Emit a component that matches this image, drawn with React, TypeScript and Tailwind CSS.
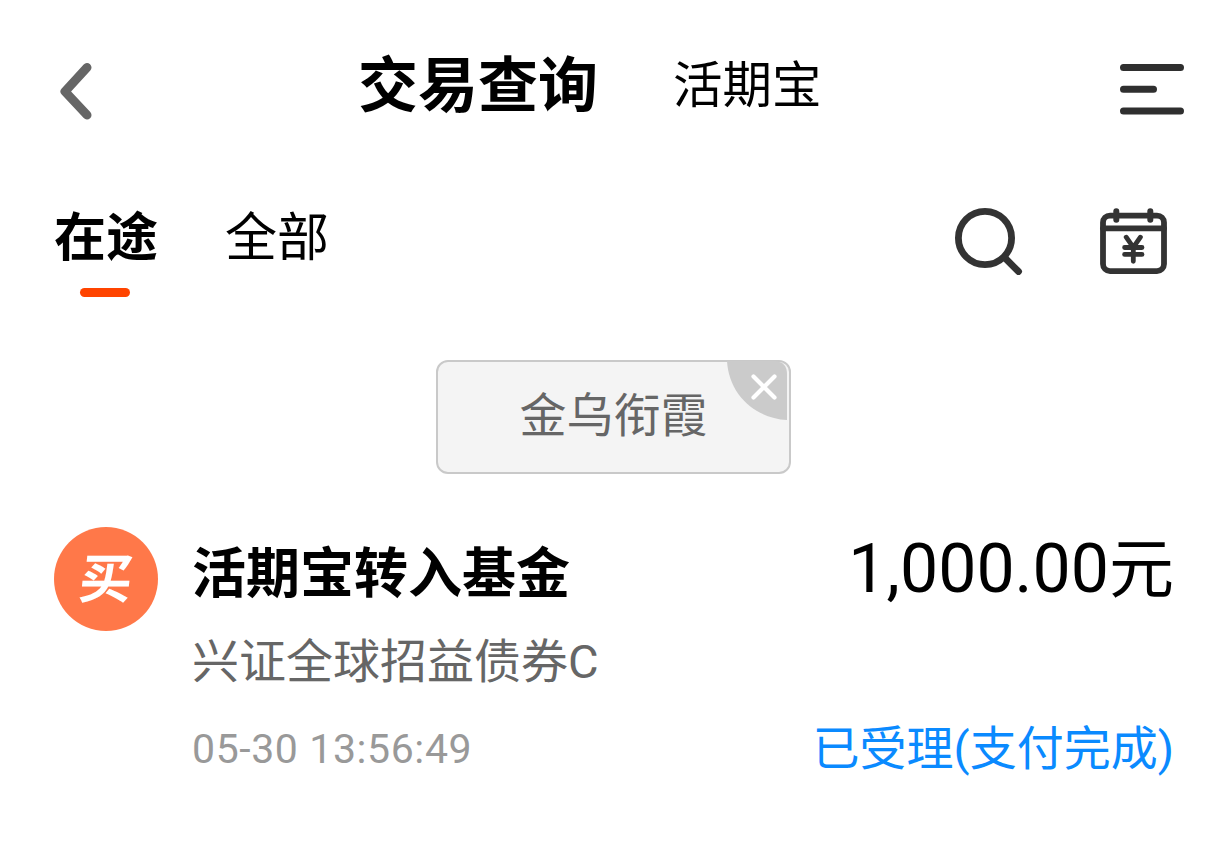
import * as React from "react"

const cjk = "font-['Noto_Sans_CJK_SC',sans-serif]"
const latin = "font-['Roboto','Noto_Sans_CJK_SC',sans-serif]"

const record = {
  badge: "买",
  title: "活期宝转入基金",
  fund: "兴证全球招益债券C",
  time: "05-30 13:56:49",
  amount: "1,000.00",
  unit: "元",
  status: "已受理(支付完成)",
}

function BackIcon() {
  return (
    <svg className="h-[60px] w-[36px]" viewBox="0 0 36 60" fill="none" stroke="#666" strokeWidth="9" strokeLinecap="round" strokeLinejoin="round">
      <path d="M30 7.500 8 31.500 30 55" />
    </svg>
  )
}

function MenuIcon() {
  return (
    <svg className="h-[52px] w-[66px]" viewBox="0 0 66 52" stroke="#2f2f2f" strokeWidth="7" strokeLinecap="round">
      <path d="M4.500 4.500H61.500M4.500 26.200H34.500M4.500 48H61.500" />
    </svg>
  )
}

function SearchIcon() {
  return (
    <svg className="h-[70px] w-[70px]" viewBox="0 0 70 70" fill="none" stroke="#333" strokeWidth="6.800" strokeLinecap="round">
      <circle cx="32" cy="32" r="26.600" />
      <path d="M52 52 65.500 65.500" />
    </svg>
  )
}

function CalendarIcon() {
  return (
    <svg className="h-[68px] w-[68px]" viewBox="0 0 68 68" fill="none" stroke="#333" strokeWidth="5.800" strokeLinecap="round" strokeLinejoin="round">
      <rect x="4" y="8.600" width="61" height="55.500" rx="7" />
      <path d="M4 21.300H65" />
      <path d="M17.300 4.300V12.800M51.300 4.300V12.800" strokeWidth="6" />
      <path d="M27.200 30.200 34.300 40.300 41.400 30.200M34.300 40V54.300M25.600 40.500H43M25.600 47.400H43" strokeWidth="4.800" />
    </svg>
  )
}

function CloseCorner() {
  return (
    <svg className="absolute -top-px right-[2px] h-[59px] w-[60px]" viewBox="0 0 60 59">
      <path d="M0 0H48Q60 1 60 13V59C28 57 2 34 0 0Z" fill="#cbcbcb" />
      <path d="M26.500 15.500 47.500 36.500M47.500 15.500 26.500 36.500" stroke="#fff" strokeWidth="4.200" strokeLinecap="round" />
    </svg>
  )
}

export default function App() {
  return (
    <main className={`h-[854px] w-[1228px] overflow-hidden bg-white text-black ${cjk}`}>
      <header className="flex h-[168px] items-start pr-[43px] pl-[57px]">
        <button className="mt-[60px]">
          <BackIcon />
        </button>
        <h1 className="mt-[41px] ml-[265px] text-[60px] leading-[80px] font-bold">交易查询</h1>
        <span className="mt-[42px] ml-[75px] text-[49.500px] leading-[80px]">活期宝</span>
        <button className="mt-[63px] ml-auto">
          <MenuIcon />
        </button>
      </header>

      <nav className="flex h-[192px] items-start pr-[61px] pl-[54px]">
        <div className="mt-[34px] flex flex-col items-center">
          <span className="text-[52px] leading-[64px] font-bold">在途</span>
          <span className="mt-[22px] mr-[2px] h-[9px] w-[50px] rounded-full bg-[#ff4400]" />
        </div>
        <span className="mt-[34px] ml-[67px] text-[52px] leading-[64px]">全部</span>
        <button className="mt-[38px] ml-auto">
          <SearchIcon />
        </button>
        <button className="mt-[39px] ml-[76px]">
          <CalendarIcon />
        </button>
      </nav>

      <div className="relative ml-[436px] flex h-[114px] w-[355px] items-center justify-center rounded-xl border-2 border-[#c9c9c9] bg-[#f4f4f4]">
        <span className="mb-[10px] text-[47px] leading-[64px] text-[#666]">金乌衔霞</span>
        <CloseCorner />
      </div>

      <section className="mt-[53px] flex items-start pr-[54px] pl-[54px]">
        <div className="flex h-[104px] w-[104px] items-center justify-center rounded-full bg-[#ff7849]">
          <span className="mb-[9px] -skew-x-6 text-[53px] leading-[56px] font-bold text-white">{record.badge}</span>
        </div>
        <div className="ml-[34px] flex flex-1 flex-col">
          <div className="flex h-[90px] items-start justify-between">
            <h2 className="mt-[8px] text-[54px] leading-[70px] font-bold">{record.title}</h2>
            <p className={`mt-[2px] flex items-baseline text-[68px] leading-[80px] ${latin}`}>
              {record.amount}
              <span className="text-[65px]">{record.unit}</span>
            </p>
          </div>
          <p className={`mt-[13px] text-[47px] leading-[64px] text-[#666] ${latin}`}>{record.fund}</p>
          <div className="mt-[23px] flex items-center justify-between">
            <time className={`text-[41px] leading-[64px] tracking-[0.600px] text-[#999] ${latin}`}>{record.time}</time>
            <span className={`text-[47px] leading-[64px] text-[#0a8aff] ${latin}`}>{record.status}</span>
          </div>
        </div>
      </section>
    </main>
  )
}
